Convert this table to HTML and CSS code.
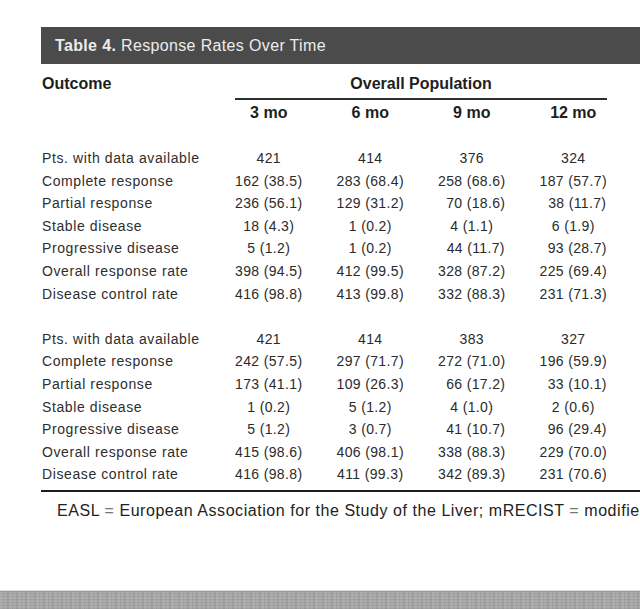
FILE: index.html
```html
<!DOCTYPE html>
<html lang="en">
<head>
<meta charset="utf-8">
<title>Table 4. Response Rates Over Time</title>
<link rel="stylesheet" href="styles.css">
</head>
<body>
<div class="page">
  <div class="titlebar"><span class="tnum">Table 4.</span> Response Rates Over Time</div>

  <div class="table">
    <div class="row head1">
      <div class="lab">Outcome</div>
      <div class="span4">Overall Population</div>
    </div>
    <div class="row rule-row">
      <div></div>
      <div class="span4 subrule"></div>
    </div>
    <div class="row head2">
      <div></div>
      <div class="num">3 mo</div>
      <div class="num">6 mo</div>
      <div class="num">9 mo</div>
      <div class="num">12 mo</div>
    </div>

    <div class="section first">
      <div class="row data"><div class="lab">Pts. with data available</div><div class="num">421</div><div class="num">414</div><div class="num">376</div><div class="num">324</div></div>
      <div class="row data"><div class="lab">Complete response</div><div class="num">162 (38.5)</div><div class="num">283 (68.4)</div><div class="num">258 (68.6)</div><div class="num">187 (57.7)</div></div>
      <div class="row data"><div class="lab">Partial response</div><div class="num">236 (56.1)</div><div class="num">129 (31.2)</div><div class="num pad">70 (18.6)</div><div class="num pad">38 (11.7)</div></div>
      <div class="row data"><div class="lab">Stable disease</div><div class="num">18 (4.3)</div><div class="num">1 (0.2)</div><div class="num">4 (1.1)</div><div class="num">6 (1.9)</div></div>
      <div class="row data"><div class="lab">Progressive disease</div><div class="num">5 (1.2)</div><div class="num">1 (0.2)</div><div class="num pad">44 (11.7)</div><div class="num pad">93 (28.7)</div></div>
      <div class="row data"><div class="lab">Overall response rate</div><div class="num">398 (94.5)</div><div class="num">412 (99.5)</div><div class="num">328 (87.2)</div><div class="num">225 (69.4)</div></div>
      <div class="row data"><div class="lab">Disease control rate</div><div class="num">416 (98.8)</div><div class="num">413 (99.8)</div><div class="num">332 (88.3)</div><div class="num">231 (71.3)</div></div>
    </div>

    <div class="section second">
      <div class="row data"><div class="lab">Pts. with data available</div><div class="num">421</div><div class="num">414</div><div class="num">383</div><div class="num">327</div></div>
      <div class="row data"><div class="lab">Complete response</div><div class="num">242 (57.5)</div><div class="num">297 (71.7)</div><div class="num">272 (71.0)</div><div class="num">196 (59.9)</div></div>
      <div class="row data"><div class="lab">Partial response</div><div class="num">173 (41.1)</div><div class="num">109 (26.3)</div><div class="num pad">66 (17.2)</div><div class="num pad">33 (10.1)</div></div>
      <div class="row data"><div class="lab">Stable disease</div><div class="num">1 (0.2)</div><div class="num">5 (1.2)</div><div class="num">4 (1.0)</div><div class="num">2 (0.6)</div></div>
      <div class="row data"><div class="lab">Progressive disease</div><div class="num">5 (1.2)</div><div class="num">3 (0.7)</div><div class="num pad">41 (10.7)</div><div class="num pad">96 (29.4)</div></div>
      <div class="row data"><div class="lab">Overall response rate</div><div class="num">415 (98.6)</div><div class="num">406 (98.1)</div><div class="num">338 (88.3)</div><div class="num">229 (70.0)</div></div>
      <div class="row data"><div class="lab">Disease control rate</div><div class="num">416 (98.8)</div><div class="num">411 (99.3)</div><div class="num">342 (89.3)</div><div class="num">231 (70.6)</div></div>
    </div>
  </div>

  <div class="bottomrule"></div>
  <p class="footnote">EASL <span class="eq">=</span> European Association for the Study of the Liver; mRECIST <span class="eq">=</span> modifie</p>
</div>
<div class="statusbar"></div>
</body>
</html>
```

FILE: styles.css
```css
html, body {
  margin: 0;
  padding: 0;
  background: #ffffff;
}
body {
  width: 640px;
  height: 609px;
  overflow: hidden;
  display: flex;
  flex-direction: column;
  font-family: "Liberation Sans", Arial, sans-serif;
  color: #2b2b2b;
}
.page {
  flex: 1;
  padding-top: 27px;
  padding-left: 41px;
  overflow: hidden;
}
.titlebar {
  height: 37px;
  line-height: 37px;
  background: #4b4b4b;
  color: #ececec;
  font-size: 16px;
  letter-spacing: 0.35px;
  padding-left: 14px;
  white-space: nowrap;
}
.tnum {
  font-weight: bold;
}
.table {
  margin-left: 1px;
  margin-top: 10px;
}
.row {
  display: grid;
  grid-template-columns: 176px repeat(4, 101.5px);
}
.span4 {
  grid-column: 2 / span 4;
  text-align: center;
}
.head1, .head2 {
  font-weight: bold;
  font-size: 16px;
  line-height: 20px;
  color: #1e1e1e;
}
.rule-row {
  margin-top: 4px;
}
.subrule {
  height: 2px;
  background: #2e2e2e;
  margin: 0 17px;
}
.head2 {
  margin-top: 3px;
}
.num {
  text-align: center;
  white-space: nowrap;
}
.pad {
  padding-left: 8px;
}
.section.first {
  margin-top: 24px;
}
.section.second {
  margin-top: 22.6px;
}
.data {
  height: 22.6px;
  line-height: 22.6px;
}
.data .lab {
  font-size: 14px;
  letter-spacing: 0.6px;
  white-space: nowrap;
  color: #2e2e2e;
}
.data .num {
  font-size: 14px;
  letter-spacing: 0.35px;
  color: #2b2b2b;
}
.bottomrule {
  margin-top: 4px;
  height: 2.5px;
  background: #1c1c1c;
}
.footnote {
  margin: 9px 0 0 16px;
  font-size: 16px;
  letter-spacing: 0.55px;
  line-height: 20px;
  white-space: nowrap;
  color: #222;
}
.eq {
  color: #777;
}
.statusbar {
  height: 19px;
  flex: none;
  background:
    linear-gradient(#dcdcdc 0, #dcdcdc 1px, #9a9a9a 1px, #9a9a9a 2px, transparent 2px),
    repeating-linear-gradient(90deg, rgba(255,255,255,0.06) 0 3px, rgba(0,0,0,0.04) 3px 4px, rgba(255,255,255,0.03) 4px 7px, rgba(0,0,0,0.05) 7px 9px),
    repeating-linear-gradient(0deg, rgba(0,0,0,0.04) 0 1px, rgba(255,255,255,0.04) 1px 3px),
    #a6a6a6;
}
```
